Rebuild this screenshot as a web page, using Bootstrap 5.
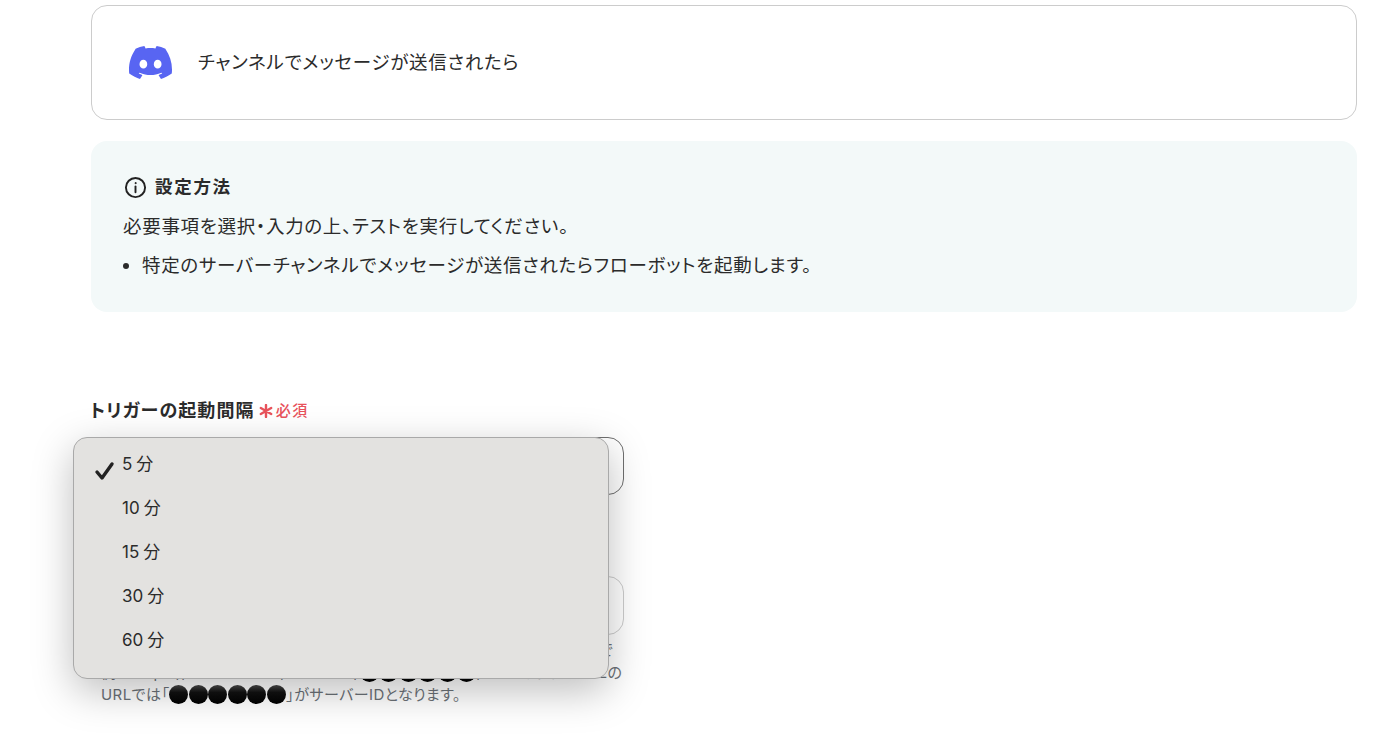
<!DOCTYPE html>
<html lang="ja">
  <head>
    <meta charset="UTF-8" />
    <meta name="viewport" content="width=device-width, initial-scale=1.0" />
    <title>トリガー設定</title>
    <link href="https://cdn.jsdelivr.net/npm/bootstrap@5.3.2/dist/css/bootstrap.min.css" rel="stylesheet" />
    <style>
      html, body { height: 744px; overflow: hidden; }
      body {
        font-family: "Inter", "Noto Sans CJK JP", sans-serif;
        font-feature-settings: "palt";
        color: #2b2b2b;
        background: #fff;
      }
      .page-wrap { padding: 5px 19px 0 91px; }
      .app-box {
        height: 115px;
        border: 1px solid #ccc;
        border-radius: 16px;
        padding-left: 37px;
        gap: 26px;
        font-size: 18.5px;
        letter-spacing: .72px;
      }
      .help-box {
        height: 171px;
        margin-top: 21px;
        padding: 33px 32px 0;
        background: #f3f9f9;
        border-radius: 16px;
        font-size: 18.5px;
        letter-spacing: .7px;
      }
      .help-title { font-weight: 700; font-size: 17.5px; letter-spacing: 1.7px; line-height: 26px; gap: 8px; margin-left: 1px; }
      .help-line { line-height: 26px; margin: 13px 0 13px; }
      .help-list { margin: 0; padding-left: 19px; line-height: 26px; }
      .help-list li::marker { font-size: 20px; }
      .form-area { margin: 86px 0 0 -3px; width: 536px; position: relative; }
      .field-label {
        font-size: 18px;
        font-weight: 700;
        line-height: 26px;
        letter-spacing: 1.1px;
        margin-bottom: 13px;
        padding-left: 2px;
        display: flex;
        align-items: center;
      }
      .req-mark {
        color: #e8525b;
        font-size: 15px;
        font-weight: 500;
        letter-spacing: 1.5px;
        margin-left: 4px;
        display: inline-flex;
        align-items: center;
        gap: 3px;
      }
      .trigger-select {
        height: 58px;
        border: 1px solid #6f6f6f;
        border-radius: 16px;
        background-image: none;
      }
      .server-label { margin-top: 43px; margin-bottom: 12px; }
      .server-input { height: 59px; border: 1px solid #ccc; border-radius: 16px; }
      .field-note {
        font-size: 15px;
        line-height: 22.5px;
        letter-spacing: .45px;
        color: #6b7177;
        padding: 4px 0 0 13px;
        margin: 0;
        white-space: nowrap;
      }
      .dot-mark {
        display: inline-block;
        width: 19px;
        height: 19px;
        border-radius: 50%;
        background: linear-gradient(180deg, #4a4a4a 0, #111 40%, #000 100%);
        vertical-align: -4px;
        margin-right: .5px;
      }
      .interval-menu {
        display: block;
        left: -15px;
        top: 39px;
        width: 536px;
        height: 242px;
        padding: 4px 0 0;
        margin: 0;
        background: #e3e2e0;
        border: 1px solid #a9a9a9;
        border-radius: 14px;
        box-shadow: 0 12px 40px rgba(0, 0, 0, .26);
        font-size: 17px;
      }
      .interval-menu .dropdown-item {
        height: 44px;
        line-height: 44px;
        padding: 0 0 0 48px;
        color: #2b2b2b;
        position: relative;
      }
      .tick-mark { position: absolute; left: 20px; top: 19px; }
      .unit-gap { margin-left: 4px; }
    </style>
  </head>
  <body>
    <div class="page-wrap">
      <!-- App row -->
      <div class="app-box d-flex align-items-center">
        <svg width="43" height="33" viewBox="0 0 24 18.4" fill="#5865f2" aria-label="Discord">
          <path transform="translate(0 -2.8)" d="M20.317 4.3698a19.7913 19.7913 0 00-4.8851-1.5152.0741.0741 0 00-.0785.0371c-.211.3753-.4447.8648-.6083 1.2495-1.8447-.2762-3.68-.2762-5.4868 0-.1636-.3933-.4058-.8742-.6177-1.2495a.077.077 0 00-.0785-.037 19.7363 19.7363 0 00-4.8852 1.515.0699.0699 0 00-.0321.0277C.5334 9.0458-.319 13.5799.0992 18.0578a.0824.0824 0 00.0312.0561c2.0528 1.5076 4.0413 2.4228 5.9929 3.0294a.0777.0777 0 00.0842-.0276c.4616-.6304.8731-1.2952 1.226-1.9942a.076.076 0 00-.0416-.1057c-.6528-.2476-1.2743-.5495-1.8722-.8923a.077.077 0 01-.0076-.1277c.1258-.0943.2517-.1923.3718-.2914a.0743.0743 0 01.0776-.0105c3.9278 1.7933 8.18 1.7933 12.0614 0a.0739.0739 0 01.0785.0095c.1202.099.246.1981.3728.2924a.077.077 0 01-.0066.1276 12.2986 12.2986 0 01-1.873.8914.0766.0766 0 00-.0407.1067c.3604.698.7719 1.3628 1.225 1.9932a.076.076 0 00.0842.0286c1.961-.6067 3.9495-1.5219 6.0023-3.0294a.077.077 0 00.0313-.0552c.5004-5.177-.8382-9.6739-3.5485-13.6604a.061.061 0 00-.0312-.0286zM8.02 15.3312c-1.1825 0-2.1569-1.0857-2.1569-2.419 0-1.3332.9555-2.4189 2.157-2.4189 1.2108 0 2.1757 1.0952 2.1568 2.419 0 1.3332-.9555 2.4189-2.1569 2.4189zm7.9748 0c-1.1825 0-2.1569-1.0857-2.1569-2.419 0-1.3332.9554-2.4189 2.1569-2.4189 1.2108 0 2.1757 1.0952 2.1568 2.419 0 1.3332-.946 2.4189-2.1568 2.4189Z" />
        </svg>
        <span>チャンネルでメッセージが送信されたら</span>
      </div>

      <!-- Help box -->
      <div class="help-box">
        <div class="help-title d-flex align-items-center">
          <svg width="23" height="23" viewBox="0 0 24 24" fill="none" stroke="#222" stroke-width="2" stroke-linecap="round">
            <circle cx="12" cy="12" r="10" />
            <path d="M12 11v6" />
            <circle cx="12" cy="7.4" r=".6" fill="#222" stroke-width="1" />
          </svg>
          <span>設定方法</span>
        </div>
        <p class="help-line">必要事項を選択・入力の上、テストを実行してください。</p>
        <ul class="help-list">
          <li>特定のサーバーチャンネルでメッセージが送信されたらフローボットを起動します。</li>
        </ul>
      </div>

      <!-- Form -->
      <div class="form-area">
        <label class="field-label">
          トリガーの起動間隔
          <span class="req-mark">
            <svg width="14" height="14" viewBox="0 0 14 14" stroke="#e8525b" stroke-width="2.4" stroke-linecap="round"><path d="M7 1v12M1.8 4l10.4 6M12.2 4 1.8 10" /></svg>
            必須
          </span>
        </label>
        <select class="form-select trigger-select" aria-label="トリガーの起動間隔"><option></option></select>

        <label class="field-label server-label">サーバーID</label>
        <input type="text" class="form-control server-input" />
        <p class="field-note">
          サーバーIDはチャンネルを開いたときのURLから取得できます。例えば、以下で<br />
          例：&nbsp;&nbsp;https://discord.com/channels/<i class="dot-mark"></i><i class="dot-mark"></i><i class="dot-mark"></i><i class="dot-mark"></i><i class="dot-mark"></i><i class="dot-mark"></i>/11111 のようなURLの<br />
          URLでは「<i class="dot-mark"></i><i class="dot-mark"></i><i class="dot-mark"></i><i class="dot-mark"></i><i class="dot-mark"></i><i class="dot-mark"></i>」がサーバーIDとなります。
        </p>

        <!-- Open select menu -->
        <ul class="dropdown-menu interval-menu list-unstyled">
          <li>
            <a class="dropdown-item" href="#">
              <svg class="tick-mark" width="21" height="20" viewBox="0 0 21 20" fill="none" stroke="#222" stroke-width="3.4" stroke-linecap="round" stroke-linejoin="round"><path d="M3 11l5 6L18 3" /></svg>
              5<span class="unit-gap">分</span>
            </a>
          </li>
          <li><a class="dropdown-item" href="#">10<span class="unit-gap">分</span></a></li>
          <li><a class="dropdown-item" href="#">15<span class="unit-gap">分</span></a></li>
          <li><a class="dropdown-item" href="#">30<span class="unit-gap">分</span></a></li>
          <li><a class="dropdown-item" href="#">60<span class="unit-gap">分</span></a></li>
        </ul>
      </div>
    </div>
    <script src="https://cdn.jsdelivr.net/npm/bootstrap@5.3.2/dist/js/bootstrap.bundle.min.js"></script>
  </body>
</html>
